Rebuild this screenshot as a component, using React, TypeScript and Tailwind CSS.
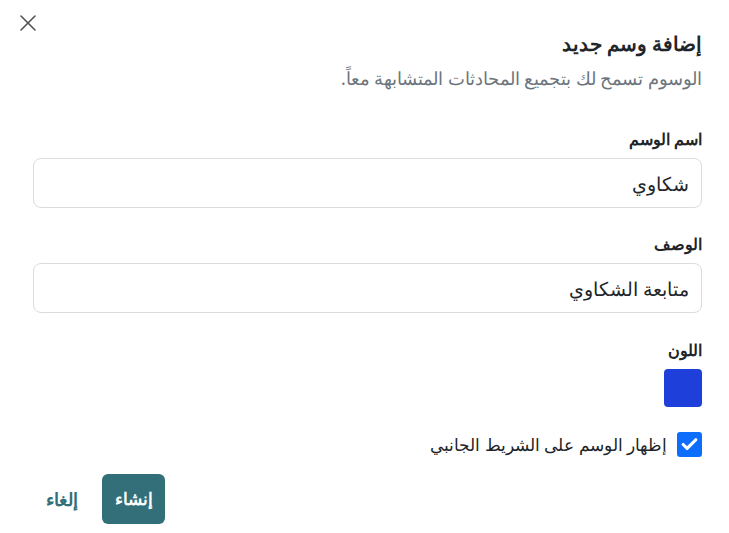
import React from "react";
import { X, Check } from "lucide-react";

const font = { fontFamily: '"Noto Sans", sans-serif' };

export default function App() {
  return (
    <div dir="rtl" className="w-[729px] h-[533px] bg-white text-[#212529] relative" style={font}>
      {/* Close */}
      <button className="absolute left-[14px] top-[9px] text-[#555]">
        <X size={28} strokeWidth={1.4} />
      </button>

      <div className="pr-[27px] pl-[33px] pt-[30px]">
        <h2 className="text-[19.5px] font-bold leading-[28px]">إضافة وسم جديد</h2>
        <p className="text-[17.5px] text-[#6c757d] mt-[8px] leading-[24px]">الوسوم تسمح لك بتجميع المحادثات المتشابهة معاً.</p>

        <div className="mt-[38px] flex flex-col gap-[8px]">
          <label className="text-[15.5px] font-bold leading-[22px]">اسم الوسم</label>
          <input
            defaultValue="شكاوي"
            className="h-[50px] w-full border border-[#dcdcdc] rounded-[8px] px-[12px] text-[18.5px] outline-none"
          />
        </div>

        <div className="mt-[25px] flex flex-col gap-[8px]">
          <label className="text-[15.5px] font-bold leading-[22px]">الوصف</label>
          <input
            defaultValue="متابعة الشكاوي"
            className="h-[50px] w-full border border-[#dcdcdc] rounded-[8px] px-[12px] text-[18.5px] outline-none"
          />
        </div>

        <div className="mt-[26px] flex flex-col gap-[8px]">
          <label className="text-[15.5px] font-bold leading-[22px]">اللون</label>
          <div className="w-[38px] h-[38px] rounded-[4px] bg-[#1e3fd9]" />
        </div>

        <div className="mt-[25px] flex items-center gap-[10px]">
          <span className="w-[25px] h-[25px] rounded-[3px] bg-[#0d6efd] flex items-center justify-center text-white">
            <Check size={19} strokeWidth={4} />
          </span>
          <span className="text-[17px] leading-[24px]">إظهار الوسم على الشريط الجانبي</span>
        </div>

        <div className="mt-[17px] flex justify-end items-center gap-[24px]">
          <button className="h-[50px] w-[63px] rounded-[6px] bg-[#336f78] text-white text-[17px] font-bold">إنشاء</button>
          <button className="w-[33px] text-[#336f78] text-[18px] font-bold ml-[12px]">إلغاء</button>
        </div>
      </div>
    </div>
  );
}
